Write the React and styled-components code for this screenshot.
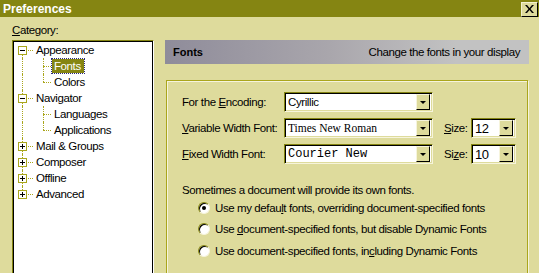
import React from "react";
import styled, { createGlobalStyle } from "styled-components";

const GlobalStyle = createGlobalStyle`
    html, body {
        margin: 0;
        padding: 0;
        background: #dedb9c;
    }
    body {
        font-family: "Liberation Sans", Arial, sans-serif;
        font-size: 11.5px;
        letter-spacing: -0.4px;
        color: #000;
    }
`;

const OLIVE = "#858512";
const LINE = "#aaa61c";
const FACE = "#dedb9c";

const treeItems = [
    { label: "Appearance", level: 0, toggle: "-" },
    { label: "Fonts", level: 1, selected: true },
    { label: "Colors", level: 1, last: true },
    { label: "Navigator", level: 0, toggle: "-" },
    { label: "Languages", level: 1 },
    { label: "Applications", level: 1, last: true },
    { label: "Mail & Groups", level: 0, toggle: "+" },
    { label: "Composer", level: 0, toggle: "+" },
    { label: "Offline", level: 0, toggle: "+" },
    { label: "Advanced", level: 0, toggle: "+", lastRoot: true },
];

export default function App() {
    return (
        <>
            <GlobalStyle />
            <Window>
                <TitleBar>
                    <Title>Preferences</Title>
                    <CloseButton>
                        <svg width="9" height="8" viewBox="0 0 9 8">
                            <path
                                d="M0 0h2l2.5 3 2.5-3h2L5.5 4 9 8H7L4.5 5 2 8H0l3.5-4z"
                                fill="#000"
                            />
                        </svg>
                    </CloseButton>
                </TitleBar>
                <Body>
                    <LeftColumn>
                        <CategoryLabel>
                            <u>C</u>ategory:
                        </CategoryLabel>
                        <Tree>
                            {treeItems.map((item, i) => (
                                <TreeRow key={i}>
                                    <Guide
                                        $up={i > 0}
                                        $down={!item.lastRoot}
                                        $right={item.level === 0}
                                        $offset={7}
                                    >
                                        {item.toggle && (
                                            <Toggle>
                                                <Minus />
                                                {item.toggle === "+" && <Plus />}
                                            </Toggle>
                                        )}
                                    </Guide>
                                    {item.level === 1 && (
                                        <Guide
                                            $up
                                            $down={!item.last}
                                            $right
                                            $offset={10}
                                        />
                                    )}
                                    <TreeLabel $selected={item.selected}>
                                        {item.label}
                                    </TreeLabel>
                                </TreeRow>
                            ))}
                        </Tree>
                    </LeftColumn>
                    <RightColumn>
                        <Header>
                            <HeaderTitle>Fonts</HeaderTitle>
                            <HeaderHint>Change the fonts in your display</HeaderHint>
                        </Header>
                        <GroupBox>
                            <FieldRow>
                                <FieldLabel>
                                    For the <u>E</u>ncoding:
                                </FieldLabel>
                                <Combo $width={149}>
                                    <ComboValue>Cyrillic</ComboValue>
                                    <ArrowButton />
                                </Combo>
                            </FieldRow>
                            <FieldRow>
                                <FieldLabel>
                                    <u>V</u>ariable Width Font:
                                </FieldLabel>
                                <Combo $width={149}>
                                    <ComboValue $font="serif">Times New Roman</ComboValue>
                                    <ArrowButton />
                                </Combo>
                                <SizeLabel>
                                    <u>S</u>ize:
                                </SizeLabel>
                                <Combo $width={45}>
                                    <ComboValue $big>12</ComboValue>
                                    <ArrowButton />
                                </Combo>
                            </FieldRow>
                            <FieldRow>
                                <FieldLabel>
                                    <u>F</u>ixed Width Font:
                                </FieldLabel>
                                <Combo $width={149}>
                                    <ComboValue $font="mono">Courier New</ComboValue>
                                    <ArrowButton />
                                </Combo>
                                <SizeLabel>
                                    Si<u>z</u>e:
                                </SizeLabel>
                                <Combo $width={45}>
                                    <ComboValue $big>10</ComboValue>
                                    <ArrowButton />
                                </Combo>
                            </FieldRow>
                            <Note>Sometimes a document will provide its own fonts.</Note>
                            <RadioList>
                                <RadioRow>
                                    <Radio $checked />
                                    <span>
                                        Use my defau<u>l</u>t fonts, overriding
                                        document-specified fonts
                                    </span>
                                </RadioRow>
                                <RadioRow>
                                    <Radio />
                                    <span>
                                        Use <u>d</u>ocument-specified fonts, but disable
                                        Dynamic Fonts
                                    </span>
                                </RadioRow>
                                <RadioRow>
                                    <Radio />
                                    <span>
                                        Use document-specified fonts, in<u>c</u>luding
                                        Dynamic Fonts
                                    </span>
                                </RadioRow>
                            </RadioList>
                        </GroupBox>
                    </RightColumn>
                </Body>
            </Window>
        </>
    );
}

const Window = styled.div`
    width: 539px;
    height: 273px;
    overflow: hidden;
    background: ${FACE};
    display: flex;
    flex-direction: column;
`;

const TitleBar = styled.div`
    height: 17px;
    flex-shrink: 0;
    background: ${OLIVE};
    display: flex;
    align-items: center;
    justify-content: space-between;
    padding: 0 1px 0 3px;
`;

const Title = styled.span`
    color: #fff;
    font-weight: bold;
    font-size: 12px;
    letter-spacing: 0;
`;

const CloseButton = styled.div`
    width: 15px;
    height: 13px;
    margin-top: 1px;
    background: ${FACE};
    border-top: 1px solid #f4f2d0;
    border-left: 1px solid #f4f2d0;
    border-right: 1px solid #000;
    border-bottom: 1px solid #000;
    display: flex;
    align-items: center;
    justify-content: center;
`;

const Body = styled.div`
    flex: 1;
    display: flex;
    padding: 0 10px 0 12px;
`;

const LeftColumn = styled.div`
    width: 142px;
    flex-shrink: 0;
    display: flex;
    flex-direction: column;
`;

const CategoryLabel = styled.div`
    margin-top: 6px;
    height: 14px;
    line-height: 14px;
    margin-bottom: 3px;
`;

const Tree = styled.div`
    height: 240px;
    background: #fff;
    border-top: 1px solid ${OLIVE};
    border-left: 1px solid ${OLIVE};
    border-right: 1px solid #fff;
    box-shadow: inset 1px 1px 0 #000, inset -1px 0 0 #000;
    padding: 1px 0 0 2px;
`;

const TreeRow = styled.div`
    height: 16px;
    display: flex;
    align-items: center;
`;

const Guide = styled.span`
    position: relative;
    width: 18px;
    align-self: stretch;
    flex-shrink: 0;
    display: flex;
    align-items: center;
    &::before {
        content: "";
        position: absolute;
        left: ${(p) => p.$offset}px;
        top: ${(p) => (p.$up ? "0" : "50%")};
        bottom: ${(p) => (p.$down ? "0" : "50%")};
        border-left: 1px dotted ${LINE};
    }
    &::after {
        content: "";
        display: ${(p) => (p.$right ? "block" : "none")};
        position: absolute;
        left: ${(p) => p.$offset}px;
        right: 0;
        top: 8px;
        border-top: 1px dotted ${LINE};
    }
`;

const Toggle = styled.span`
    position: relative;
    z-index: 1;
    margin-left: 3px;
    width: 7px;
    height: 7px;
    border: 1px solid ${LINE};
    background: #fff;
    display: flex;
    align-items: center;
    justify-content: center;
`;

const Minus = styled.span`
    width: 5px;
    height: 1px;
    background: #000;
`;

const Plus = styled.span`
    position: absolute;
    left: 3px;
    top: 1px;
    width: 1px;
    height: 5px;
    background: #000;
`;

const TreeLabel = styled.span`
    margin-left: 1px;
    padding: 0 3px 0 2px;
    height: 14px;
    line-height: 14px;
    white-space: nowrap;
    color: ${(p) => (p.$selected ? "#fff" : "#000")};
    background: ${(p) => (p.$selected ? OLIVE : "transparent")};
    outline: ${(p) => (p.$selected ? "1px dotted #2a2a80" : "none")};
`;

const RightColumn = styled.div`
    flex: 1;
    margin-left: 11px;
    padding-top: 23px;
    display: flex;
    flex-direction: column;
`;

const Header = styled.div`
    height: 24px;
    flex-shrink: 0;
    display: flex;
    align-items: center;
    justify-content: space-between;
    padding: 0 9px 0 8px;
    background: linear-gradient(to right, #8f8c9a, #a9a6ac 45%, #c2c2c2 80%);
`;

const HeaderTitle = styled.span`
    font-weight: bold;
    font-size: 11px;
    letter-spacing: 0;
`;

const HeaderHint = styled.span``;

const GroupBox = styled.div`
    margin: 16px 1px 0 1px;
    height: 188px;
    flex-shrink: 0;
    border: 1px solid ${LINE};
    box-shadow: 1px 1px 0 #f6f4dc, inset 1px 1px 0 #f6f4dc;
    padding: 11px 0 0 15px;
    display: flex;
    flex-direction: column;
`;

const FieldRow = styled.div`
    height: 20px;
    margin-bottom: 6px;
    display: flex;
    align-items: center;
`;

const FieldLabel = styled.span`
    width: 102px;
    flex-shrink: 0;
`;

const SizeLabel = styled.span`
    margin-left: 11px;
    width: 27px;
`;

const Combo = styled.div`
    width: ${(p) => p.$width}px;
    height: 20px;
    box-sizing: border-box;
    background: #fff;
    border-top: 1px solid ${OLIVE};
    border-left: 1px solid ${OLIVE};
    border-right: 1px solid #f6f4dc;
    border-bottom: 1px solid #f6f4dc;
    box-shadow: inset 1px 1px 0 #000, inset -1px -1px 0 ${FACE};
    display: flex;
    align-items: center;
    padding: 2px 2px 2px 3px;
`;

const ComboValue = styled.span`
    flex: 1;
    white-space: nowrap;
    overflow: hidden;
    font-family: ${(p) =>
        p.$font === "serif"
            ? '"Liberation Serif", "Times New Roman", serif'
            : p.$font === "mono"
            ? '"Liberation Mono", "Courier New", monospace'
            : '"Liberation Sans", Arial, sans-serif'};
    font-size: ${(p) =>
        p.$font === "serif" ? "11.5px" : p.$font === "mono" ? "12px" : p.$big ? "13px" : "11.5px"};
    letter-spacing: ${(p) => (p.$font ? "0" : "-0.4px")};
`;

const ArrowButton = styled.span`
    width: 12px;
    height: 14px;
    flex-shrink: 0;
    background: ${FACE};
    border-top: 1px solid #f6f4dc;
    border-left: 1px solid #f6f4dc;
    border-right: 1px solid #000;
    border-bottom: 1px solid #000;
    display: flex;
    align-items: center;
    justify-content: center;
    &::after {
        content: "";
        border-left: 3px solid transparent;
        border-right: 3px solid transparent;
        border-top: 3px solid #000;
        margin-top: 1px;
    }
`;

const Note = styled.div`
    margin-top: 13px;
    height: 14px;
    line-height: 14px;
`;

const RadioList = styled.div`
    padding-left: 16px;
    display: flex;
    flex-direction: column;
`;

const RadioRow = styled.div`
    height: 21.5px;
    display: flex;
    align-items: center;
    white-space: nowrap;
`;

const Radio = styled.span`
    width: 12px;
    height: 12px;
    box-sizing: border-box;
    flex-shrink: 0;
    margin-right: 5px;
    border-radius: 50%;
    background: #fff;
    border: 1px solid;
    border-color: ${OLIVE} #f6f4dc #f6f4dc ${OLIVE};
    box-shadow: inset 1px 1px 0 #000;
    display: flex;
    align-items: center;
    justify-content: center;
    &::after {
        content: "";
        display: ${(p) => (p.$checked ? "block" : "none")};
        width: 4px;
        height: 4px;
        border-radius: 50%;
        background: #000;
    }
`;
